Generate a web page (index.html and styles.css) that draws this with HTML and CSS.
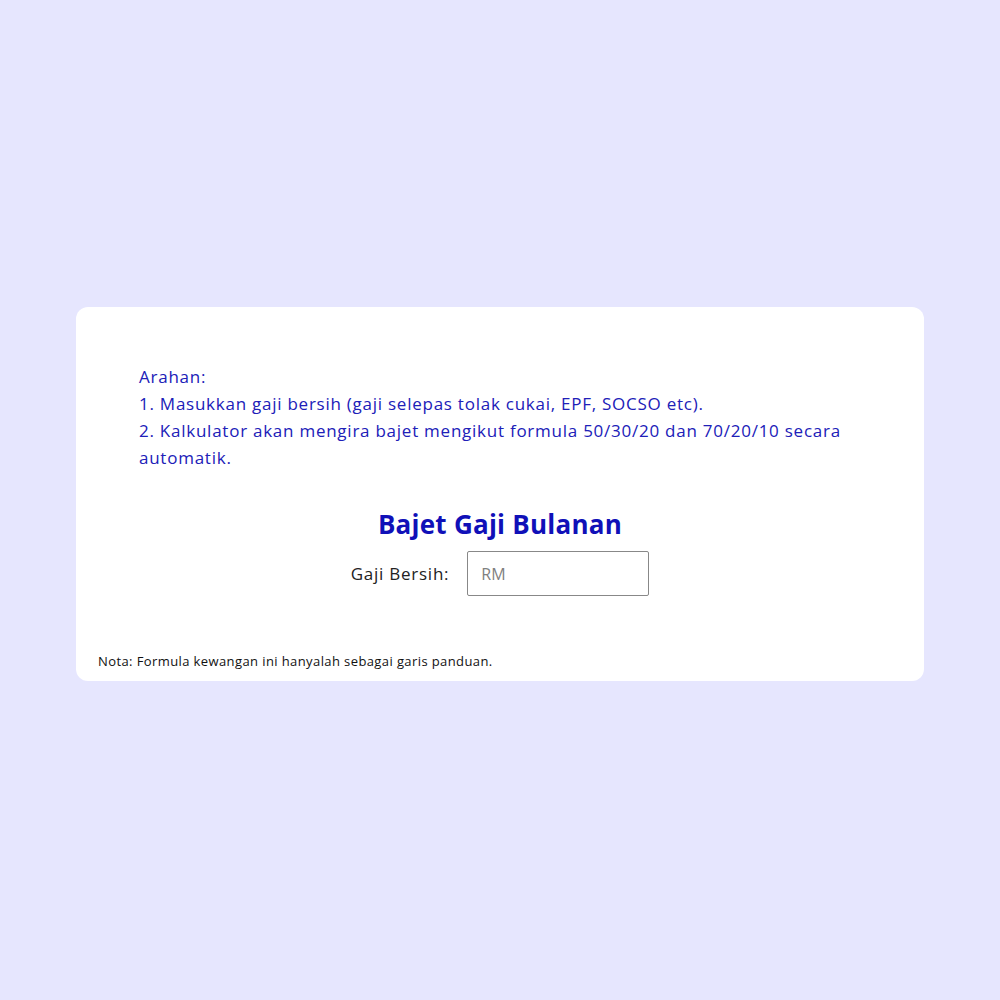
FILE: index.html
```html
<!DOCTYPE html>
<html lang="ms">
<head>
    <meta charset="UTF-8">
    <meta name="viewport" content="width=device-width, initial-scale=1.0">
    <title>Bajet Gaji Bulanan</title>
    <link rel="stylesheet" href="styles.css">
</head>
<body>
    <div class="container">
        <div class="arahan">
            Arahan:<br>
            1. Masukkan gaji bersih (gaji selepas tolak cukai, EPF, SOCSO etc).<br>
            2. Kalkulator akan mengira bajet mengikut formula 50/30/20 dan 70/20/10 secara automatik.
        </div>

        <h1>Bajet Gaji Bulanan</h1>
        <div class="form-group">
            <label for="gaji">Gaji Bersih:</label>
            <input type="number" id="gaji" placeholder="RM">
        </div>

        <p class="nota">Nota: Formula kewangan ini hanyalah sebagai garis panduan.</p>
    </div>
</body>
</html>
```

FILE: styles.css
```css
body {
    font-family: "Open Sans", "DejaVu Sans", sans-serif;
    margin: 0;
    min-height: 100vh;
    display: flex;
    align-items: center;
    justify-content: center;
    background-color: #e6e6fe;
}
.container {
    background-color: white;
    width: 848px;
    box-sizing: border-box;
    margin-top: -12px;
    padding: 56px 22px 11px;
    border-radius: 12px;
}
.arahan {
    margin: 0 41px;
    color: #2020b8;
    font-size: 17px;
    letter-spacing: 0.75px;
    line-height: 27px;
}
h1 {
    text-align: center;
    color: #1010b8;
    font-size: 26px;
    letter-spacing: 0.25px;
    line-height: 32px;
    margin: 37px 0 11px;
}
.form-group {
    display: flex;
    justify-content: center;
    align-items: center;
    gap: 18px;
}
label {
    font-size: 17px;
    letter-spacing: 0.75px;
    color: #222;
}
input {
    width: 182px;
    height: 45px;
    box-sizing: border-box;
    padding: 0 13px;
    border: 1px solid #888;
    border-radius: 2px;
    font-family: inherit;
    font-size: 16px;
}
input::placeholder {
    color: #808080;
}
.nota {
    margin: 56px 0 0;
    font-size: 13px;
    letter-spacing: 0.4px;
    line-height: 18px;
    color: #111;
}
```
